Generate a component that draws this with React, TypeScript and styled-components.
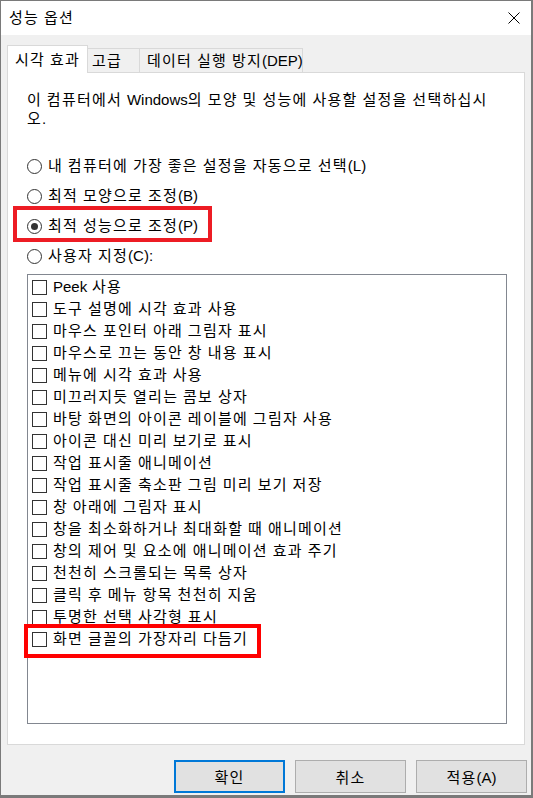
import React from 'react';
import styled, { createGlobalStyle, css } from 'styled-components';

const GlobalStyle = createGlobalStyle`
  html, body {
    margin: 0;
    padding: 0;
    background: #fff;
  }
  body {
    font-family: "Liberation Sans", "Noto Sans CJK KR", sans-serif;
    font-size: 15px;
    color: #000;
    letter-spacing: 1.25px;
    word-spacing: -0.6px;
  }
`;

const Window = styled.div`
  width: 533px;
  height: 798px;
  box-sizing: border-box;
  border-style: solid;
  border-color: #7a7a7a;
  border-width: 1px 2px 3px 1px;
  background: #f0f0f0;
  display: flex;
  flex-direction: column;
`;

const TitleBar = styled.div`
  height: 34px;
  flex: none;
  background: #fff;
  display: flex;
  align-items: center;
  justify-content: space-between;
  padding: 0 11px 0 8px;
`;

const Title = styled.span`
  line-height: 20px;
`;

const Latin = styled.span`
  letter-spacing: 0;
`;

const Body = styled.div`
  flex: 1;
  display: flex;
  flex-direction: column;
  padding: 10px 6px 2px 6px;
`;

const TabStrip = styled.div`
  display: flex;
  align-items: flex-end;
  height: 28px;
  margin-bottom: -1px;
  position: relative;
  z-index: 1;
`;

const Tab = styled.div<{ $active?: boolean; $width: number; $pad: number }>`
  box-sizing: border-box;
  width: ${p => p.$width}px;
  padding-left: ${p => p.$pad}px;
  display: flex;
  align-items: center;
  white-space: nowrap;
  border: 1px solid #d9d9d9;
  border-bottom: none;
  line-height: 20px;
  ${p => p.$active
    ? css`
        height: 28px;
        background: #fff;
      `
    : css`
        height: 24px;
        margin-bottom: 1px;
        margin-left: -1px;
        background: #f0f0f0;
      `}
`;

const Panel = styled.div`
  height: 673px;
  box-sizing: border-box;
  background: #fff;
  border: 1px solid #d9d9d9;
  padding: 17px 0 0 19px;
`;

const Intro = styled.p`
  margin: 0;
  line-height: 19px;
  white-space: nowrap;
`;

const RadioGroup = styled.div`
  margin-top: 23px;
  display: flex;
  flex-direction: column;
`;

const RadioRow = styled.label`
  position: relative;
  height: 30px;
  display: flex;
  align-items: center;
  white-space: nowrap;
`;

const Radio = styled.span<{ $checked?: boolean }>`
  width: 15px;
  height: 15px;
  flex: none;
  box-sizing: border-box;
  border: 1px solid #333;
  border-radius: 50%;
  background: #fff;
  display: flex;
  align-items: center;
  justify-content: center;
  &::after {
    content: '';
    width: 7px;
    height: 7px;
    border-radius: 50%;
    background: ${p => (p.$checked ? '#333' : 'transparent')};
  }
`;

const Label = styled.span`
  margin-left: 6px;
  line-height: 20px;
`;

const Highlight = styled.span<{ $color: string; $top: number; $left: number; $width: number; $height: number }>`
  position: absolute;
  top: ${p => p.$top}px;
  left: ${p => p.$left}px;
  width: ${p => p.$width}px;
  height: ${p => p.$height}px;
  box-sizing: border-box;
  border: 4px solid ${p => p.$color};
  pointer-events: none;
`;

const ListBox = styled.div`
  margin-top: 3px;
  width: 480px;
  height: 450px;
  box-sizing: border-box;
  border: 1px solid #828790;
  padding: 1px 0 0 4px;
  display: flex;
  flex-direction: column;
`;

const CheckRow = styled.label`
  position: relative;
  height: 22px;
  display: flex;
  align-items: center;
  white-space: nowrap;
`;

const CheckBox = styled.span`
  width: 15px;
  height: 15px;
  box-sizing: border-box;
  border: 1px solid #333;
  background: #fff;
  flex: none;
`;

const ButtonRow = styled.div`
  margin-top: 15px;
  margin-right: -2px;
  display: flex;
  justify-content: flex-end;
  gap: 10px;
`;

const Button = styled.button<{ $primary?: boolean }>`
  width: 111px;
  height: 33px;
  box-sizing: border-box;
  background: #e1e1e1;
  border: ${p => (p.$primary ? '2px solid #0078d7' : '1px solid #adadad')};
  font-family: inherit;
  font-size: 15px;
  letter-spacing: inherit;
  color: #000;
  padding: 0;
`;

const CloseIcon = () => (
  <svg width="12" height="12" viewBox="0 0 12 12">
    <path d="M0.5 0.5L11.5 11.5M11.5 0.5L0.5 11.5" stroke="#000" strokeWidth="1" fill="none" />
  </svg>
);

// Hangul gets the extra tracking, Latin runs keep their natural width
const txt = (s: string) =>
  s.split(/([A-Za-z()]+)/).map((part, i) =>
    /[A-Za-z()]/.test(part) ? <Latin key={i}>{part}</Latin> : part
  );

const radios = [
  '내 컴퓨터에 가장 좋은 설정을 자동으로 선택(L)',
  '최적 모양으로 조정(B)',
  '최적 성능으로 조정(P)',
  '사용자 지정(C):',
];

const effects = [
  'Peek 사용',
  '도구 설명에 시각 효과 사용',
  '마우스 포인터 아래 그림자 표시',
  '마우스로 끄는 동안 창 내용 표시',
  '메뉴에 시각 효과 사용',
  '미끄러지듯 열리는 콤보 상자',
  '바탕 화면의 아이콘 레이블에 그림자 사용',
  '아이콘 대신 미리 보기로 표시',
  '작업 표시줄 애니메이션',
  '작업 표시줄 축소판 그림 미리 보기 저장',
  '창 아래에 그림자 표시',
  '창을 최소화하거나 최대화할 때 애니메이션',
  '창의 제어 및 요소에 애니메이션 효과 주기',
  '천천히 스크롤되는 목록 상자',
  '클릭 후 메뉴 항목 천천히 지움',
  '투명한 선택 사각형 표시',
  '화면 글꼴의 가장자리 다듬기',
];

export default function App() {
  return (
    <>
      <GlobalStyle />
      <Window>
        <TitleBar>
          <Title>성능 옵션</Title>
          <CloseIcon />
        </TitleBar>
        <Body>
          <TabStrip>
            <Tab $active $width={81} $pad={7}>시각 효과</Tab>
            <Tab $width={53} $pad={4}>고급</Tab>
            <Tab $width={164} $pad={7}>{txt('데이터 실행 방지(DEP)')}</Tab>
          </TabStrip>
          <Panel>
            <Intro>
              {txt('이 컴퓨터에서 Windows의 모양 및 성능에 사용할 설정을 선택하십시')}
              <br />
              오.
            </Intro>
            <RadioGroup>
              {radios.map((r, i) => (
                <RadioRow key={r}>
                  <Radio $checked={i === 2} />
                  <Label>{txt(r)}</Label>
                  {i === 2 && (
                    <Highlight $color="#ed1c24" $top={-5} $left={-14} $width={199} $height={36} />
                  )}
                </RadioRow>
              ))}
            </RadioGroup>
            <ListBox>
              {effects.map((e, i) => (
                <CheckRow key={e}>
                  <CheckBox />
                  <Label>{txt(e)}</Label>
                  {i === effects.length - 1 && (
                    <Highlight $color="#ff0000" $top={-4} $left={-8} $width={237} $height={34} />
                  )}
                </CheckRow>
              ))}
            </ListBox>
          </Panel>
          <ButtonRow>
            <Button $primary>확인</Button>
            <Button>취소</Button>
            <Button>{txt('적용(A)')}</Button>
          </ButtonRow>
        </Body>
      </Window>
    </>
  );
}
